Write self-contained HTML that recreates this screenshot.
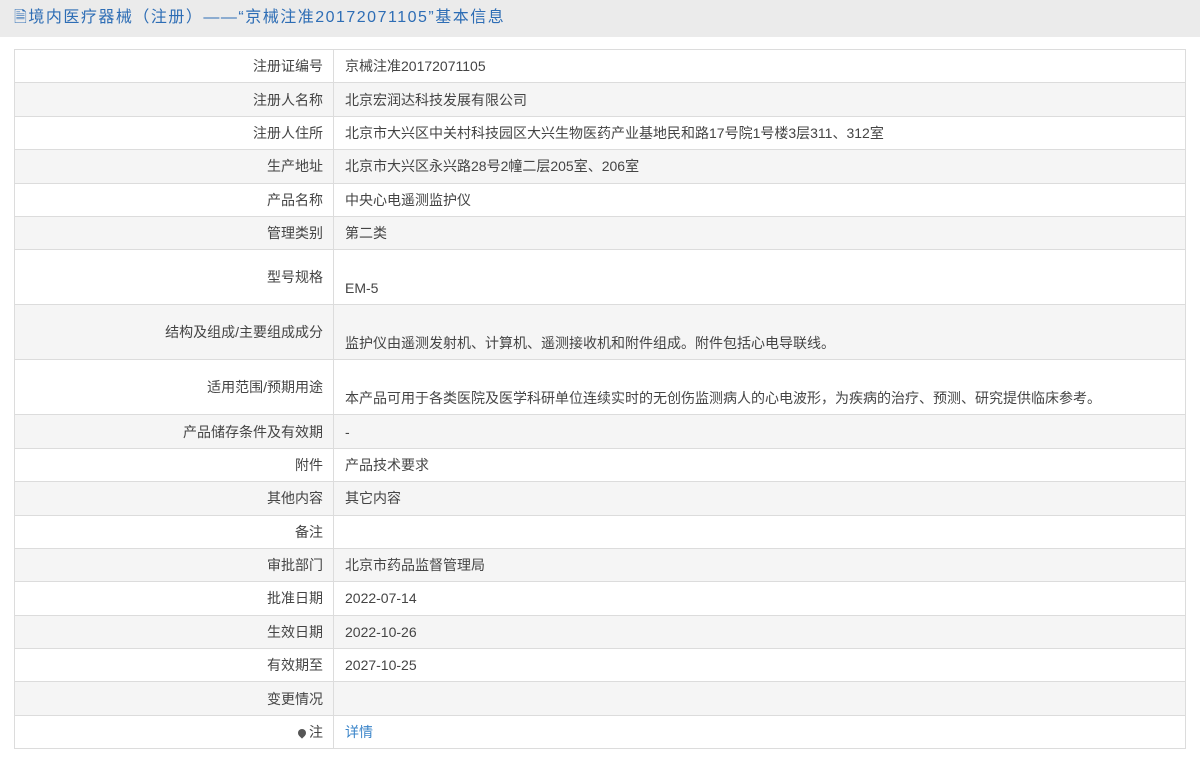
<!DOCTYPE html>
<html><head><meta charset="utf-8"><style>
body{margin:0;width:1200px;height:760px;background:#fff;font-family:"Liberation Sans","Noto Sans CJK SC",sans-serif;font-size:14px;color:#444;overflow:hidden}
.hd{height:37px;background:#ebebeb;color:#2d6db5;font-size:16px;line-height:35px;padding-left:14px;letter-spacing:1.5px}
table{position:absolute;left:14px;top:49px;width:1172px;border-collapse:collapse;border:1px solid #d4d4d4}
td{border:1px solid #dcdcdc;height:32.4px;padding:0;}
td.l{width:319px;text-align:right;padding-right:10px;box-sizing:border-box}
td.v{padding-left:11px}
tr:nth-child(even){background:#f5f5f5}
tr.t td{height:55px}
tr.t td.v{padding-top:22px;box-sizing:border-box}
a{color:#3b85c9;text-decoration:none}
.pin{display:inline-block;width:8px;height:8px;background:#555;border-radius:50% 50% 50% 0;transform:rotate(-45deg);margin-right:3px}
</style></head><body>
<div class="hd">&#x1F5CE;境内医疗器械（注册）——“京械注准20172071105”基本信息</div>
<table>
<tr><td class="l">注册证编号</td><td class="v">京械注准20172071105</td></tr>
<tr><td class="l">注册人名称</td><td class="v">北京宏润达科技发展有限公司</td></tr>
<tr><td class="l">注册人住所</td><td class="v">北京市大兴区中关村科技园区大兴生物医药产业基地民和路17号院1号楼3层311、312室</td></tr>
<tr><td class="l">生产地址</td><td class="v">北京市大兴区永兴路28号2幢二层205室、206室</td></tr>
<tr><td class="l">产品名称</td><td class="v">中央心电遥测监护仪</td></tr>
<tr><td class="l">管理类别</td><td class="v">第二类</td></tr>
<tr class="t"><td class="l">型号规格</td><td class="v">EM-5</td></tr>
<tr class="t"><td class="l">结构及组成/主要组成成分</td><td class="v">监护仪由遥测发射机、计算机、遥测接收机和附件组成。附件包括心电导联线。</td></tr>
<tr class="t"><td class="l">适用范围/预期用途</td><td class="v">本产品可用于各类医院及医学科研单位连续实时的无创伤监测病人的心电波形，为疾病的治疗、预测、研究提供临床参考。</td></tr>
<tr><td class="l">产品储存条件及有效期</td><td class="v">-</td></tr>
<tr><td class="l">附件</td><td class="v">产品技术要求</td></tr>
<tr><td class="l">其他内容</td><td class="v">其它内容</td></tr>
<tr><td class="l">备注</td><td class="v"></td></tr>
<tr><td class="l">审批部门</td><td class="v">北京市药品监督管理局</td></tr>
<tr><td class="l">批准日期</td><td class="v">2022-07-14</td></tr>
<tr><td class="l">生效日期</td><td class="v">2022-10-26</td></tr>
<tr><td class="l">有效期至</td><td class="v">2027-10-25</td></tr>
<tr><td class="l">变更情况</td><td class="v"></td></tr>
<tr><td class="l"><span class="pin"></span>注</td><td class="v"><a>详情</a></td></tr>
</table>
</body></html>
